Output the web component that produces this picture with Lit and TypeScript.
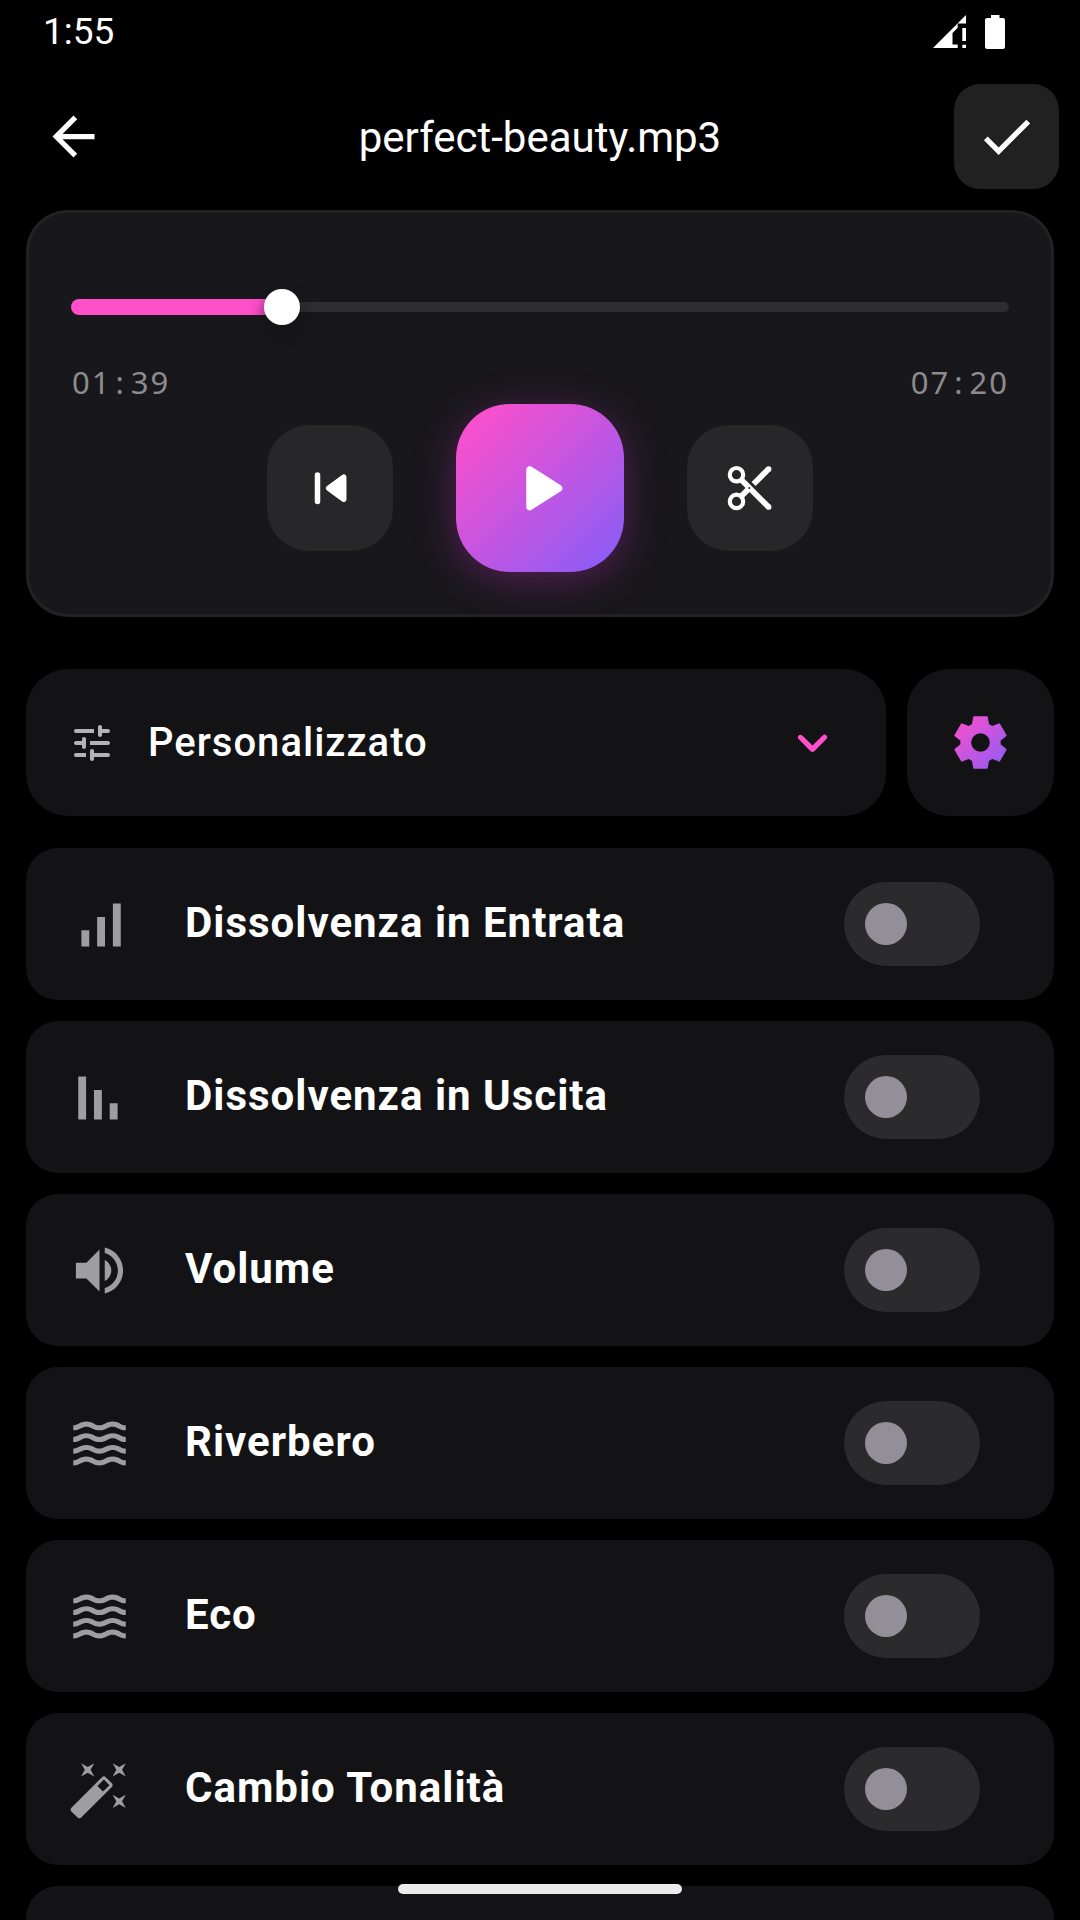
import { LitElement, html, svg, css, type TemplateResult, type SVGTemplateResult } from "lit";
import { customElement, property, state } from "lit/decorators.js";

/* Six-toothed gear outline on a 24-unit grid. */
const gearPoints = Array.from({ length: 6 }, (_, k) => {
  const a = (k * Math.PI) / 3;
  const tooth = [
    [-2.85, -6.75],
    [-2.4, -9.6],
    [2.4, -9.6],
    [2.85, -6.75],
  ];
  return tooth
    .map(([x, y]) => {
      const px = 12 + x * Math.cos(a) - y * Math.sin(a);
      const py = 12 + x * Math.sin(a) + y * Math.cos(a);
      return `${px.toFixed(2)},${py.toFixed(2)}`;
    })
    .join(" ");
}).join(" ");

const WAVE =
  "M17 16.99c-1.35 0-2.2.42-2.95.8-.65.33-1.18.6-2.05.6-.9 0-1.4-.25-2.05-.6-.75-.38-1.57-.8-2.95-.8s-2.2.42-2.95.8c-.65.33-1.17.6-2.05.6v1.95c1.35 0 2.2-.42 2.95-.8.65-.33 1.17-.6 2.05-.6s1.4.25 2.05.6c.75.38 1.57.8 2.95.8s2.2-.42 2.95-.8c.65-.33 1.18-.6 2.05-.6.9 0 1.4.25 2.05.6.75.38 1.58.8 2.95.8v-1.95c-.9 0-1.4-.25-2.05-.6-.75-.38-1.6-.8-2.95-.8z";

const waves = svg`${[0, -4.45, -8.9, -13.35].map(
  (dy) => svg`<path d=${WAVE} transform="translate(0 ${dy})"/>`
)}`;

type Effect = { label: string; icon: SVGTemplateResult };

const EFFECTS: Effect[] = [
  {
    label: "Dissolvenza in Entrata",
    icon: svg`<path d="M5.1 14.2h3v6.2h-3zM11.1 9.1h3v11.3h-3zM17.1 4h3v16.4h-3z"/>`,
  },
  {
    label: "Dissolvenza in Uscita",
    icon: svg`<path d="M3.9 4h3v16.4h-3zM9.9 9.1h3v11.3h-3zM15.9 14.2h3v6.2h-3z"/>`,
  },
  {
    label: "Volume",
    icon: svg`<path d="M3 9v6h4l5 5V4L7 9H3zm13.5 3c0-1.77-1.02-3.29-2.5-4.03v8.05c1.48-.73 2.5-2.25 2.5-4.02zM14 3.23v2.06c2.89.86 5 3.54 5 6.71s-2.11 5.85-5 6.71v2.06c4.01-.91 7-4.49 7-8.77s-2.99-7.86-7-8.77z"/>`,
  },
  { label: "Riverbero", icon: waves },
  { label: "Eco", icon: waves },
  {
    label: "Cambio Tonalità",
    icon: svg`<path d="M7.5,5.6L5,7L6.4,4.5L5,2L7.5,3.4L10,2L8.6,4.5L10,7L7.5,5.6M19.5,15.4L22,14L20.6,16.5L22,19L19.5,17.6L17,19L18.4,16.5L17,14L19.5,15.4M22,2L20.6,4.5L22,7L19.5,5.6L17,7L18.4,4.5L17,2L19.5,3.4L22,2M13.34,12.78L15.78,10.34L13.66,8.22L11.22,10.66L13.34,12.78M14.37,7.29L16.71,9.63C17.1,10 17.1,10.65 16.71,11.04L5.04,22.71C4.65,23.1 4,23.1 3.63,22.71L1.29,20.37C0.9,20 0.9,19.35 1.29,18.96L12.96,7.29C13.35,6.9 14,6.9 14.37,7.29Z"/>`,
  },
];

const clock = (total: number): [string, string] => [
  String(Math.floor(total / 60)).padStart(2, "0"),
  String(total % 60).padStart(2, "0"),
];

@customElement("status-bar")
class StatusBar extends LitElement {
  static styles = css`
    :host {
      display: flex;
      align-items: center;
      justify-content: space-between;
      height: 63px;
      padding: 0 75px 0 43px;
      font-size: 37px;
      line-height: 42px;
    }
    .icons {
      display: flex;
      align-items: center;
      gap: 19px;
    }
    .signal {
      width: 33px;
      height: 34px;
    }
    .battery {
      width: 20px;
      height: 34px;
    }
    svg {
      display: block;
      fill: #fff;
    }
  `;

  render() {
    return html`
      <span>1:55</span>
      <span class="icons">
        <svg class="signal" viewBox="0 0 33 34" aria-hidden="true">
          <path d="M33 0V8.500H24.700V12.700L19.500 18V29.500H24.700V33H0zM29.300 13H33V26H29.300zM29.300 29.700H33V33H29.300z" />
        </svg>
        <svg class="battery" viewBox="0 0 20 34" aria-hidden="true">
          <path d="M6 0H14.500V3H18Q20 3 20 5V32Q20 34 18 34H2Q0 34 0 32V5Q0 3 2 3H6z" />
        </svg>
      </span>
    `;
  }
}

@customElement("player-card")
class PlayerCard extends LitElement {
  @property({ type: Number }) duration = 440;
  @state() private position = 99;

  static styles = css`
    :host {
      display: block;
      padding: 76px 42px 42px;
      border: 3px solid #222224;
      border-radius: 42px;
      background: #18171b;
    }
    .seek {
      display: grid;
      align-items: center;
      height: 36px;
    }
    .track,
    .fill,
    .range {
      grid-area: 1 / 1;
    }
    .track {
      height: 10px;
      border-radius: 5px;
      background: #2e2d32;
    }
    .fill {
      height: 16px;
      border-radius: 8px 0 0 8px;
      background: #ff4fcb;
    }
    .range {
      appearance: none;
      height: 36px;
      margin: 0 -18px;
      background: transparent;
      cursor: pointer;
    }
    .range::-webkit-slider-runnable-track {
      height: 36px;
    }
    .range::-webkit-slider-thumb {
      appearance: none;
      width: 36px;
      height: 36px;
      border-radius: 50%;
      background: #fff;
      box-shadow: 0 8px 16px rgb(18 18 18 / 0.7);
    }
    .times {
      display: flex;
      justify-content: space-between;
      margin-top: 37px;
      padding-left: 1px;
      color: #8c8b8d;
      font: 31px / 40px "Noto Sans", sans-serif;
      letter-spacing: 2px;
    }
    .colon {
      padding: 0 5px 0 4px;
    }
    .controls {
      display: flex;
      align-items: center;
      justify-content: center;
      gap: 63px;
      margin-top: 2px;
    }
    button {
      display: grid;
      place-items: center;
      width: 126px;
      height: 126px;
      padding: 0;
      border: 0;
      border-radius: 42px;
      background: #272729;
      cursor: pointer;
    }
    .play {
      width: 168px;
      height: 168px;
      border-radius: 54px;
      background: linear-gradient(135deg, #ff4fcb 5%, #8b5cf6 95%);
      box-shadow: 0 8px 40px rgb(190 50 190 / 0.36);
    }
    svg {
      width: 63px;
      height: 63px;
      fill: #fff;
      stroke: #fff;
    }
  `;

  private seek(e: Event) {
    this.position = Number((e.target as HTMLInputElement).value);
  }

  private time(total: number): TemplateResult {
    const [m, s] = clock(total);
    return html`<span>${m}<span class="colon">:</span>${s}</span>`;
  }

  render() {
    const percent = (this.position / this.duration) * 100;
    return html`
      <div class="seek">
        <div class="track"></div>
        <div class="fill" style="width: ${percent}%"></div>
        <input
          class="range"
          type="range"
          min="0"
          max=${this.duration}
          .value=${String(this.position)}
          aria-label="Posizione"
          @input=${this.seek}
        />
      </div>
      <div class="times">${this.time(this.position)}${this.time(this.duration)}</div>
      <div class="controls">
        <button type="button" aria-label="Inizio">
          <svg viewBox="0 1 63 63" stroke-linejoin="round" stroke-linecap="round">
            <path d="M18.500 19V45.500" stroke-width="5.500" />
            <path d="M44.700 21.200V43.200L29.700 32.200z" stroke-width="5.500" />
          </svg>
        </button>
        <button class="play" type="button" aria-label="Riproduci">
          <svg viewBox="0 0 63 63" stroke-linejoin="round">
            <path d="M20.800 12.700V49.900L49.800 31.300z" stroke-width="7" />
          </svg>
        </button>
        <button type="button" aria-label="Taglia">
          <svg viewBox="1 1 63 63">
            <circle cx="18.500" cy="18.700" r="6.700" fill="none" stroke-width="4.200" />
            <circle cx="18.500" cy="45.400" r="6.700" fill="none" stroke-width="4.200" />
            <path d="M23.300 23.800L50.600 51" stroke-width="5.700" />
            <path d="M50.600 13L35.600 28" stroke-width="5.700" />
            <path d="M23.300 40.200L30 33.500" stroke-width="5.700" />
            <circle cx="50.600" cy="13" r="2.850" stroke="none" />
            <circle cx="50.600" cy="51" r="2.850" stroke="none" />
            <circle cx="31.300" cy="32" r="1" fill="#272729" stroke="none" />
          </svg>
        </button>
      </div>
    `;
  }
}

@customElement("preset-bar")
class PresetBar extends LitElement {
  static styles = css`
    :host {
      display: flex;
      gap: 21px;
      height: 147px;
    }
    .picker {
      display: flex;
      flex: 1;
      align-items: center;
      padding: 0 42px;
      border-radius: 42px;
      background: #131315;
    }
    .tune {
      flex: none;
      width: 48px;
      height: 48px;
      fill: #b4b4b6;
    }
    select {
      flex: 1;
      min-width: 0;
      height: 84px;
      padding: 0 0 0 32px;
      border: 0;
      appearance: none;
      background: transparent;
      color: #fff;
      font: 500 40px / 42px Roboto, sans-serif;
      letter-spacing: 1px;
      cursor: pointer;
    }
    option {
      background: #131315;
    }
    .chevron {
      flex: none;
      width: 63px;
      height: 63px;
      fill: #ff4fcb;
    }
    button {
      display: grid;
      place-items: center;
      width: 147px;
      padding: 0;
      border: 0;
      border-radius: 42px;
      background: #131315;
      cursor: pointer;
    }
    .gear {
      width: 63px;
      height: 63px;
    }
  `;

  render() {
    return html`
      <label class="picker">
        <svg class="tune" viewBox="0 0 24 24" aria-hidden="true">
          <path
            d="M3 18c0 .55.45 1 1 1h5v-2H4c-.55 0-1 .45-1 1zM3 6c0 .55.45 1 1 1h9V5H4c-.55 0-1 .45-1 1zm10 14v-1h7c.55 0 1-.45 1-1s-.45-1-1-1h-7v-1c0-.55-.45-1-1-1s-1 .45-1 1v4c0 .55.45 1 1 1s1-.45 1-1zM7 10v1H4c-.55 0-1 .45-1 1s.45 1 1 1h3v1c0 .55.45 1 1 1s1-.45 1-1v-4c0-.55-.45-1-1-1s-1 .45-1 1zm14 2c0-.55-.45-1-1-1h-9v2h9c.55 0 1-.45 1-1zm-5-3c.55 0 1-.45 1-1V7h3c.55 0 1-.45 1-1s-.45-1-1-1h-3V4c0-.55-.45-1-1-1s-1 .45-1 1v4c0 .55.45 1 1 1z"
          />
        </svg>
        <select aria-label="Preset">
          <option>Personalizzato</option>
        </select>
        <svg class="chevron" viewBox="0 0 24 24" aria-hidden="true">
          <path
            d="M8.12 9.290L12 13.170l3.880-3.880c.39-.39 1.020-.39 1.410 0s.39 1.020 0 1.410l-4.590 4.590c-.39.39-1.020.39-1.410 0L6.700 10.700c-.39-.39-.39-1.020 0-1.410.39-.38 1.030-.39 1.420 0z"
          />
        </svg>
      </label>
      <button type="button" aria-label="Impostazioni">
        <svg class="gear" viewBox="0 0 24 24">
          <defs>
            <linearGradient id="g" gradientUnits="userSpaceOnUse" x1="2" y1="2" x2="22" y2="22">
              <stop offset="0" stop-color="#ff4fcb" />
              <stop offset="1" stop-color="#8b5cf6" />
            </linearGradient>
          </defs>
          <polygon points=${gearPoints} fill="url(#g)" stroke="url(#g)" stroke-width=".8" stroke-linejoin="round" />
          <circle cx="12" cy="12" r="3.550" fill="#131315" />
        </svg>
      </button>
    `;
  }
}

@customElement("effect-row")
class EffectRow extends LitElement {
  @property({ attribute: false }) effect?: Effect;

  static styles = css`
    :host {
      display: block;
      flex: none;
      height: 152px;
      border-radius: 32px;
      background: #131315;
    }
    .row {
      display: flex;
      align-items: center;
      height: 100%;
      padding: 0 74px 0 42px;
    }
    svg {
      flex: none;
      width: 63px;
      height: 63px;
      fill: #9e9ea0;
    }
    .name {
      flex: 1;
      padding: 0 21px 2px 54px;
      font-size: 42px;
      font-weight: 700;
      line-height: 48px;
      letter-spacing: 1px;
    }
    .switch {
      display: flex;
      flex: none;
      align-items: center;
      appearance: none;
      width: 136px;
      height: 84px;
      margin: 0;
      padding: 0 21px;
      border-radius: 42px;
      background: #2b2b2d;
      cursor: pointer;
    }
    .switch::before {
      content: "";
      width: 42px;
      height: 42px;
      border-radius: 50%;
      background: #938f99;
    }
    .switch:checked {
      justify-content: flex-end;
      background: #ff4fcb;
    }
    .switch:checked::before {
      background: #fff;
    }
  `;

  render() {
    if (!this.effect) return html``;
    return html`
      <label class="row">
        <svg viewBox="0 0 24 24" aria-hidden="true">${this.effect.icon}</svg>
        <span class="name">${this.effect.label}</span>
        <input class="switch" type="checkbox" role="switch" />
      </label>
    `;
  }
}

@customElement("app-root")
class AppRoot extends LitElement {
  static styles = css`
    :host {
      position: relative;
      display: flex;
      flex-direction: column;
      height: 100vh;
      overflow: hidden;
      background: #000;
      color: #fff;
      font-family: Roboto, sans-serif;
    }
    .header {
      display: grid;
      grid-template-columns: 105px 1fr 105px;
      align-items: center;
      padding: 21px;
    }
    .header button {
      display: grid;
      place-items: center;
      height: 105px;
      padding: 0;
      border: 0;
      border-radius: 26px;
      background: transparent;
      cursor: pointer;
    }
    .header .done {
      background: #212121;
    }
    .header svg {
      width: 63px;
      height: 63px;
      fill: #fff;
    }
    .title {
      margin: 0;
      padding-top: 2px;
      font-size: 42px;
      font-weight: 400;
      line-height: 48px;
      text-align: center;
    }
    .body {
      display: flex;
      flex: 1;
      flex-direction: column;
      min-height: 0;
      padding: 0 26px;
    }
    .presets {
      flex: none;
      margin: 52px 0 32px;
    }
    .list {
      display: flex;
      flex: 1;
      flex-direction: column;
      gap: 21px;
      min-height: 0;
      overflow-y: auto;
      scrollbar-width: none;
    }
    .home {
      position: absolute;
      bottom: 26px;
      left: 50%;
      width: 284px;
      height: 10px;
      margin-left: -142px;
      border-radius: 5px;
      background: #ebebeb;
    }
  `;

  render() {
    return html`
      <status-bar></status-bar>
      <header class="header">
        <button type="button" aria-label="Indietro">
          <svg viewBox="0 0 24 24">
            <path d="M20 11H7.830l5.590-5.590L12 4l-8 8 8 8 1.410-1.410L7.830 13H20v-2z" />
          </svg>
        </button>
        <h1 class="title">perfect-beauty.mp3</h1>
        <button class="done" type="button" aria-label="Fatto">
          <svg viewBox="0 0 24 24">
            <path d="M9 16.170L4.830 12l-1.420 1.410L9 19 21 7l-1.410-1.410z" />
          </svg>
        </button>
      </header>
      <main class="body">
        <player-card></player-card>
        <preset-bar class="presets"></preset-bar>
        <section class="list">
          ${EFFECTS.map((effect) => html`<effect-row .effect=${effect}></effect-row>`)}
          <effect-row></effect-row>
        </section>
      </main>
      <div class="home"></div>
    `;
  }
}
